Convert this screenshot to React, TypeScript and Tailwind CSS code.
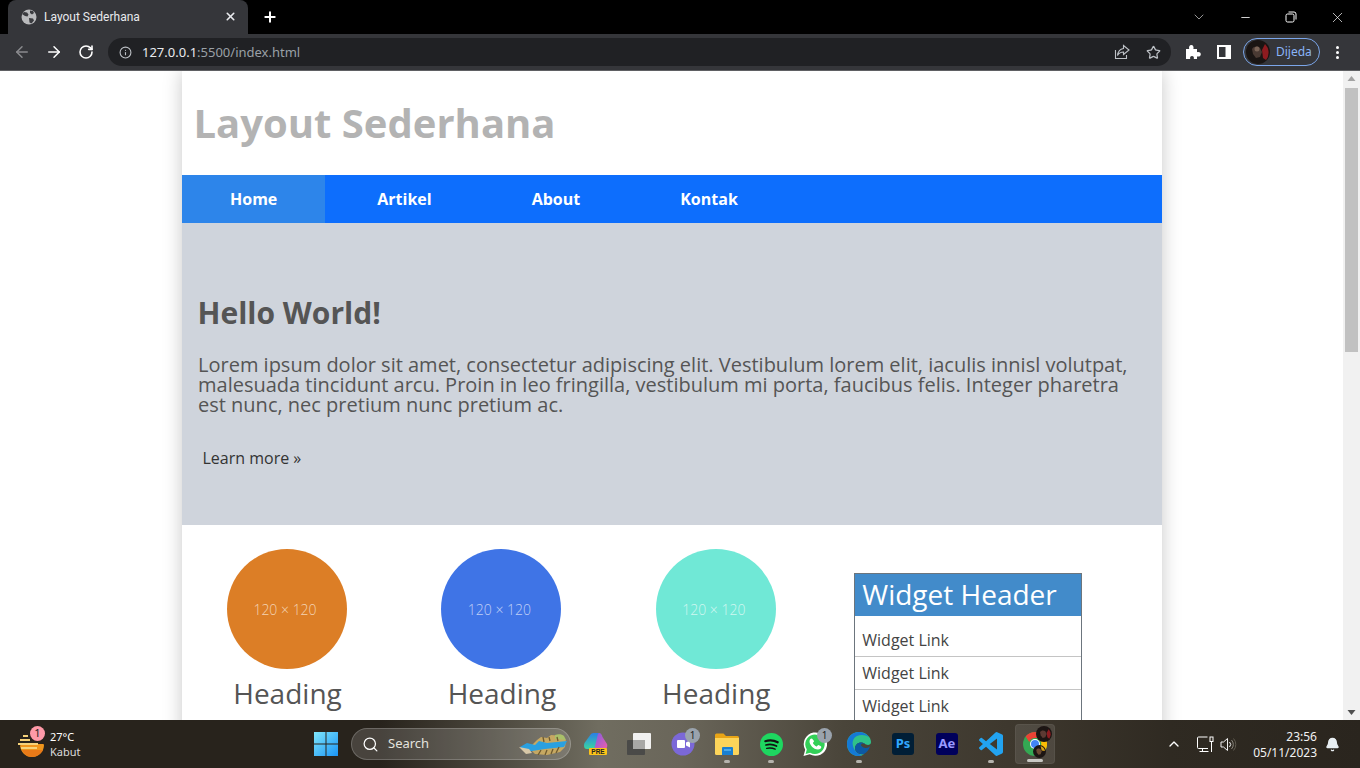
import React from "react";
import { ArrowLeft, ArrowRight, RotateCw, Info, Star, X, Plus, ChevronDown, Minus, Search, ChevronUp, Bell } from "lucide-react";

const font = { fontFamily: '"Open Sans", sans-serif' };

function Globe() {
  return (
    <svg width="16" height="16" viewBox="0 0 16 16">
      <circle cx="8" cy="8" r="7.5" fill="#b9babc" />
      <path d="M3 3l3 .5 1.5 2-1 2-2.5-.5-3-2zM9 1.5l3 .5 1 2-2 1.5-2-1.5zM8 9l4 .5 1 2-2.5 3-2-1z" fill="#3a3b3f" />
    </svg>
  );
}

function Restore() {
  return (
    <svg width="12" height="12" viewBox="0 0 12 12" fill="none" stroke="#fff" strokeWidth="1">
      <rect x="1" y="3" width="8" height="8" rx="1.5" />
      <path d="M3.5 1h5.5a2 2 0 0 1 2 2v5.5" />
    </svg>
  );
}

function Share() {
  return (
    <svg width="16" height="16" viewBox="0 0 16 16" fill="none" stroke="#bdc1c6" strokeWidth="1.1">
      <path d="M1.5 6v8.5h11V11" />
      <path d="M9.5 1.5 15 6l-5.500 4.500V8C7 8 5 9 3.500 11.500 4 7.500 6 5 9.500 4.500z" />
    </svg>
  );
}

function Puzzle() {
  return (
    <svg width="16" height="16" viewBox="0 0 16 16" fill="#fff">
      <path d="M1 5h3.200C3.600 3 4.500 1 6.300 1s2.700 2 2.100 4H12v3.300c2-.6 3.800.2 3.800 2s-1.800 2.700-3.800 2.100V15H8.800c.5-1.900-.4-3-1.800-3s-2.300 1.100-1.800 3H1z" />
    </svg>
  );
}

function SidePanel() {
  return (
    <svg width="14" height="14" viewBox="0 0 14 14">
      <rect width="14" height="14" fill="#fff" />
      <rect x="2" y="2" width="6.500" height="10" fill="#35363a" />
    </svg>
  );
}

function Avatar() {
  return (
    <svg width="24" height="24" viewBox="0 0 24 24">
      <circle cx="12" cy="12" r="12" fill="#1a1513" />
      <path d="M19 4a12 12 0 0 1 1 16l-3-2-1-8z" fill="#8e1b20" />
      <path d="M6 9c2-3 6-3 8-1l2 4-2 5-4 1-3-4z" fill="#4a3a33" />
      <circle cx="11" cy="9" r="2.500" fill="#7a6457" />
    </svg>
  );
}

function TopBars() {
  return (
    <div className="shrink-0">
      <div className="flex h-[34px] items-end bg-black pl-2">
        <div className="flex h-[34px] w-[240px] items-center rounded-t-lg bg-[#35363a] pb-[1px] pl-[13px] pr-[11px]" style={{ fontFamily: "Roboto, sans-serif" }}>
          <Globe />
          <span className="ml-[7px] flex-1 text-[12px] text-[#e8eaed]">Layout Sederhana</span>
          <X size={13} color="#e8eaed" strokeWidth={3} />
        </div>
        <div className="ml-[14px] flex h-[34px] w-[16px] items-center">
          <Plus size={16} color="#fff" strokeWidth={3} />
        </div>
        <div className="ml-auto flex h-[34px] items-center self-start">
          <div className="ml-[-2px] flex w-[46px] justify-center"><ChevronDown size={16} color="#e0e0e0" strokeWidth={1} /></div>
          <div className="flex w-[46px] justify-center"><Minus size={13} color="#fff" strokeWidth={1.5} /></div>
          <div className="flex w-[46px] justify-center"><Restore /></div>
          <div className="flex w-[46px] justify-center"><X size={17} color="#fff" strokeWidth={1} /></div>
        </div>
      </div>
      <div className="flex h-[36px] items-center bg-[#35363a] pr-[14px]">
        <div className="flex w-[108px] items-center pl-[13px]">
          <ArrowLeft size={18} color="#8a8b8e" strokeWidth={2} />
          <ArrowRight size={18} color="#fff" strokeWidth={2} className="ml-[14px]" />
          <RotateCw size={16} color="#fff" strokeWidth={2.400} className="ml-[15px]" />
        </div>
        <div className="flex h-[28px] w-[1063px] items-center rounded-full bg-[#202124] pl-[11px] pr-[10px]">
          <Info size={13} color="#bdc1c6" strokeWidth={2} />
          <span className="ml-[10px] flex-1 pt-[1px] text-[13px]">
            <span className="text-[#e8eaed]">127.0.0.1</span>
            <span className="text-[#9aa0a6]">:5500/index.html</span>
          </span>
          <Share />
          <Star size={15} color="#bdc1c6" strokeWidth={2} className="ml-[16px]" />
        </div>
        <div className="ml-[14px] flex items-center">
          <Puzzle />
          <div className="ml-[16px]"><SidePanel /></div>
          <div className="ml-[12px] flex h-[28px] w-[77px] items-center rounded-full border border-[#7ba6ea] pl-[2px]">
            <Avatar />
            <span className="ml-[6px] text-[12px] text-[#8ab4f8]">Dijeda</span>
          </div>
          <div className="ml-[16px] flex flex-col gap-[2px]">
            <span className="h-[3px] w-[3px] rounded-full bg-white" />
            <span className="h-[3px] w-[3px] rounded-full bg-white" />
            <span className="h-[3px] w-[3px] rounded-full bg-white" />
          </div>
        </div>
      </div>
      <div className="h-px bg-[#5f6063]" />
    </div>
  );
}

function Col({ color, text }: { color: string; text: string }) {
  return (
    <div className="flex w-[210px] flex-col items-center">
      <div className={`flex h-[120px] w-[120px] items-center justify-center rounded-full pr-[4px] ${color}`}>
        <span className="text-[14px] font-light" style={{ color: text }}>120 × 120</span>
      </div>
      <h3 className="ml-[1px] mt-[4px] text-[28px] font-normal leading-[40px] text-[#555]">Heading</h3>
    </div>
  );
}

function Widget() {
  return (
    <div className="ml-[33px] mt-[48px] h-[200px] w-[228px] border border-[#6c757d]">
      <div className="flex h-[42px] items-center bg-[#428bca] pb-[2px] pl-[7.500px] text-[28px] text-white">Widget Header</div>
      <div className="mt-[8px] flex h-[33px] items-center border-b border-[#c4c4c4] pl-[7.500px] text-[16px] text-[#444]">Widget Link</div>
      <div className="flex h-[33px] items-center border-b border-[#c4c4c4] pl-[7.500px] text-[16px] text-[#444]">Widget Link</div>
      <div className="flex h-[33px] items-center border-b border-[#c4c4c4] pl-[7.500px] text-[16px] text-[#444]">Widget Link</div>
    </div>
  );
}

function Page() {
  return (
    <div className="flex min-h-0 flex-1 bg-white">
      <div className="min-w-0 flex-1 overflow-hidden">
        <div className="ml-[182px] h-[800px] w-[980px] bg-white shadow-[0_0_18px_rgba(0,0,0,0.22)]" style={font}>
          <div className="flex h-[104px] items-center pl-[11.500px]">
            <h1 className="text-[40px] font-bold text-[#b3b3b3]">Layout Sederhana</h1>
          </div>
          <nav className="flex h-[48px] gap-[4px] bg-[#0d6efd] text-[16px] font-bold text-white">
            <a className="flex items-center bg-[#2d85ea] px-12">Home</a>
            <a className="flex items-center px-12">Artikel</a>
            <a className="flex items-center px-12">About</a>
            <a className="flex items-center px-12">Kontak</a>
          </nav>
          <section className="h-[302px] bg-[#cfd4dc] px-4 pt-[68px] text-[#555]">
            <h2 className="ml-[-0.500px] text-[30px] font-bold leading-[44px]">Hello World!</h2>
            <p className="mt-[20px] text-[20px] leading-[20px]">
              Lorem ipsum dolor sit amet, consectetur adipiscing elit. Vestibulum lorem elit, iaculis innisl volutpat, malesuada tincidunt arcu. Proin in leo fringilla, vestibulum mi porta, faucibus felis. Integer pharetra est nunc, nec pretium nunc pretium ac.
            </p>
            <a className="mt-[31px] ml-[4.500px] block text-[16px] leading-[24px] text-[#333]">Learn more »</a>
          </section>
          <div className="flex">
            <div className="flex gap-[4.400px] pt-[24px]">
              <Col color="bg-[#dc7e26]" text="#f3d3b4" />
              <Col color="bg-[#3f74e6]" text="#c0d0f6" />
              <Col color="bg-[#70e8d6]" text="#d0f7f1" />
            </div>
            <Widget />
          </div>
        </div>
      </div>
      <div className="flex w-[17px] shrink-0 flex-col items-center bg-[#f1f1f1]">
        <svg width="17" height="17" viewBox="0 0 17 17"><path d="M8.500 5l4 5h-8z" fill="#a3a3a3" /></svg>
        <div className="h-[264px] w-[13px] bg-[#c1c1c1]" />
        <div className="flex-1" />
        <svg width="17" height="17" viewBox="0 0 17 17"><path d="M8.500 12l4-5h-8z" fill="#505050" /></svg>
      </div>
    </div>
  );
}

function Slot({ children, dot, badge, first }: { children: React.ReactNode; dot?: boolean; badge?: boolean; first?: boolean }) {
  return (
    <div className={`relative flex h-[48px] items-center justify-center ${first ? "w-[43px] pl-[1px]" : "w-[44px]"}`}>
      {children}
      {badge && (
        <span className="absolute right-[5px] top-[8px] flex h-[15px] w-[15px] items-center justify-center rounded-full bg-[#9aa3ad] text-[10px] text-[#222]">1</span>
      )}
      {dot && <span className="absolute bottom-[5px] h-[3px] w-[6px] rounded-full bg-[#b5b3ad]" />}
    </div>
  );
}

function Windows() {
  return (
    <svg width="24" height="24" viewBox="0 0 24 24">
      <defs>
        <linearGradient id="w" x1="0" y1="0" x2="1" y2="1">
          <stop offset="0" stopColor="#7fe6fb" /><stop offset="1" stopColor="#1a94f5" />
        </linearGradient>
      </defs>
      <path fill="url(#w)" d="M0 0h11.500v11.500H0zM12.500 0H24v11.500H12.500zM0 12.500h11.500V24H0zM12.500 12.500H24V24H12.500z" />
    </svg>
  );
}

function Copilot() {
  return (
    <svg width="24" height="22" viewBox="0 0 24 22">
      <defs>
        <linearGradient id="cl" x1="0" y1="0" x2="0" y2="1">
          <stop offset="0" stopColor="#2a7fe6" /><stop offset="1" stopColor="#39d6a0" />
        </linearGradient>
        <linearGradient id="cr" x1="0" y1="0" x2="1" y2="1">
          <stop offset="0" stopColor="#7a5be8" /><stop offset="1" stopColor="#f05fa8" />
        </linearGradient>
      </defs>
      <path d="M7 1c1-1 2-1 3-1h5l-4 16H3C0 16-.5 13 .5 10z" fill="url(#cl)" />
      <path d="M15 0c2 0 3 2 3.500 4L23 11c1 3-1 6-4 6h-9l3-12c.3-2 1-5 2-5z" fill="url(#cr)" />
      <rect x="5" y="15" width="18" height="7" rx="1" fill="#fcc419" />
      <text x="14" y="21" textAnchor="middle" fontSize="6.500" fontWeight="800" fill="#222" fontFamily="Liberation Sans">PRE</text>
    </svg>
  );
}

function TaskView() {
  return (
    <svg width="24" height="22" viewBox="0 0 24 22">
      <rect x="0" y="7" width="18" height="15" rx="1" fill="#4a4a48" />
      <rect x="6" y="0" width="18" height="16" rx="1" fill="#f1f1f0" />
      <rect x="6" y="7" width="12" height="9" fill="#a8a8a6" />
    </svg>
  );
}

function Meet() {
  return (
    <svg width="24" height="24" viewBox="0 0 24 24">
      <circle cx="12" cy="12" r="11.500" fill="#7b68d8" />
      <rect x="6" y="8" width="8" height="8" rx="1" fill="#fff" />
      <path d="M15 10.500l4-2v7l-4-2z" fill="#fff" />
    </svg>
  );
}

function Folder() {
  return (
    <svg width="24" height="22" viewBox="0 0 24 22">
      <path d="M0 2a1.500 1.500 0 0 1 1.500-1.500h7L11 3h11.500A1.500 1.500 0 0 1 24 4.500V6H0z" fill="#e8a416" />
      <path d="M0 5h24v15.500a1.500 1.500 0 0 1-1.500 1.500h-21A1.500 1.500 0 0 1 0 20.500z" fill="#fcd45a" />
      <path d="M8 14h9a1 1 0 0 1 1 1v7H7v-7a1 1 0 0 1 1-1z" fill="#1a7fd0" />
      <rect x="9" y="16" width="7" height="2" fill="#4ba9ea" />
    </svg>
  );
}

function Spotify() {
  return (
    <svg width="23" height="23" viewBox="0 0 24 24">
      <circle cx="12" cy="12" r="12" fill="#1ed760" />
      <g fill="none" stroke="#111" strokeLinecap="round">
        <path d="M5.500 8.500c4.500-1.300 9-1 13 1.200" strokeWidth="2.200" />
        <path d="M6.200 12.500c3.800-1 7.500-.7 11 1.100" strokeWidth="1.800" />
        <path d="M7 16c3-.7 6-.5 8.800.9" strokeWidth="1.500" />
      </g>
    </svg>
  );
}

function WhatsApp() {
  return (
    <svg width="24" height="24" viewBox="0 0 24 24">
      <path d="M.500 24l1.700-6.200A11.700 11.700 0 1 1 6.700 22.300z" fill="#fff" />
      <path d="M2.600 21.900l1.200-4.400A9.700 9.700 0 1 1 7.200 20.700z" fill="#33d058" />
      <path d="M8.500 6.500c-.8 0-2 1.200-2 3 0 3 3.800 8 8.500 8 2 0 3.300-1.300 3.300-2.500 0-.6-2.500-1.900-3-1.900s-1 1.300-1.600 1.300c-1 0-3.700-2.600-3.700-3.500 0-.5 1-1.200 1-1.700S9.200 6.500 8.500 6.500z" fill="#fff" />
    </svg>
  );
}

function Edge() {
  return (
    <svg width="24" height="24" viewBox="0 0 24 24">
      <path d="M12 0C5 0 0 5 0 12c0 7 5 12 11 12 3 0 5-1 6-2-5 1-9-2-9-6 0-2 1-3 2-4 2-2 6-2 8 0 1 1 6 2 6-2C24 5 19 0 12 0z" fill="#2fc28a" />
      <path d="M0 12C0 5 5 0 12 0c4 0 8 2 10 5-3-2-8-3-12-1C6 6 5 10 6 14c1 4 4 8 9 9-1 .6-2.500 1-4 1C5 24 0 19 0 12z" fill="#1579d6" />
      <path d="M8 16c0-2 1-3 2-4 2-2 6-2 8 0-2-1-4-.5-4 1s3 3 5 3c2 0 3-1 4-2-1 4-3 6-6 8-5 1-9-2-9-6z" fill="#0c59a4" />
    </svg>
  );
}

function AppTile({ bg, fg, label }: { bg: string; fg: string; label: string }) {
  return (
    <div className={`flex h-[22px] w-[22px] items-center justify-center rounded-[3px] text-[13px] font-bold ${bg} ${fg}`}>{label}</div>
  );
}

function VSCode() {
  return (
    <svg width="24" height="24" viewBox="0 0 24 24">
      <path fill="#22a3f0" d="M23.150 2.587L18.210.21a1.494 1.494 0 0 0-1.705.29l-9.460 8.630-4.120-3.128a.999.999 0 0 0-1.276.057L.327 7.261A1 1 0 0 0 .326 8.740L3.899 12 .326 15.260a1 1 0 0 0 .001 1.479L1.650 17.940a.999.999 0 0 0 1.276.057l4.120-3.128 9.460 8.630a1.492 1.492 0 0 0 1.704.29l4.942-2.377A1.500 1.500 0 0 0 24 20.060V3.939a1.500 1.500 0 0 0-.850-1.352zm-5.146 14.861L10.826 12l7.178-5.448v10.896z" />
    </svg>
  );
}

function Chrome() {
  return (
    <div className="relative h-[24px] w-[24px]">
      <svg width="24" height="24" viewBox="0 0 24 24">
        <circle cx="12" cy="12" r="12" fill="#34a853" />
        <path d="M12 0a12 12 0 0 1 10.400 6H12a6 6 0 0 0-5.700 4L2.600 4.600A12 12 0 0 1 12 0z" fill="#ea4335" />
        <path d="M22.400 6A12 12 0 0 1 12 24l5.200-9A6 6 0 0 0 16 7z" fill="#fbbc04" />
        <circle cx="12" cy="12" r="5" fill="#fff" />
        <circle cx="12" cy="12" r="4" fill="#4285f4" />
      </svg>
      <div className="absolute right-[-5px] top-[-6px]">
        <svg width="16" height="16" viewBox="0 0 24 24"><circle cx="12" cy="12" r="12" fill="#1c1513" /><path d="M6 9c2-3 6-3 8-1l2 4-2 5-4 1-3-4z" fill="#5c3a33" /><path d="M19 5a12 12 0 0 1 1 14l-3-2-1-7z" fill="#8e1b20" /></svg>
      </div>
      <div className="absolute bottom-[-2px] right-[1px]">
        <svg width="13" height="13" viewBox="0 0 24 24"><circle cx="12" cy="12" r="12" fill="#1c1513" /><path d="M6 9c2-3 6-3 8-1l2 4-2 5-4 1-3-4z" fill="#6c4a33" /><path d="M14 2a12 12 0 0 1 8 9l-6-1z" fill="#d9a416" /></svg>
      </div>
    </div>
  );
}

function Weather() {
  return (
    <svg width="26" height="22" viewBox="0 0 26 22">
      <path d="M3 9h22c1 0 1 1 1 1 0 6-5 12-12 12S3 17 2 11z" fill="#f0961c" />
      <path d="M4 15h21c-2 4-6 7-11 7S6 19 4 15z" fill="#e87a18" />
      <g fill="#f6d27a">
        <rect x="5" y="0" width="5" height="2" />
        <rect x="2" y="4" width="10" height="2" />
        <rect x="0" y="8" width="20" height="2" />
        <rect x="3" y="12" width="16" height="2" />
      </g>
    </svg>
  );
}

function Network() {
  return (
    <svg width="17" height="17" viewBox="0 0 17 17" fill="none" stroke="#fff" strokeWidth="1">
      <path d="M11 12.500H1.500a1 1 0 0 1-1-1V2a1 1 0 0 1 1-1h9" />
      <path d="M5.500 12.500v3M2.500 15.500h9" />
      <rect x="13" y="1" width="3" height="4.500" />
      <path d="M14.500 5.500V16" />
    </svg>
  );
}

function Speaker() {
  return (
    <svg width="17" height="15" viewBox="0 0 17 15" fill="none" strokeWidth="1">
      <path d="M1 5h2.500L7.500 1.500v12L3.500 10H1z" stroke="#f2f2f2" />
      <path d="M9.500 5a3.500 3.500 0 0 1 0 5" stroke="#f2f2f2" />
      <path d="M11.500 3a6.500 6.500 0 0 1 0 9" stroke="#8a877e" />
      <path d="M13.500 1.500a9 9 0 0 1 0 12" stroke="#5f5b50" />
    </svg>
  );
}

function Feather() {
  return (
    <svg width="50" height="21" viewBox="0 0 50 21">
      <path d="M18 6l4-3 6 1 4-3 12 1 3 5-1 6-5 5-13 3-12-1-6-6z" fill="#c6a862" />
      <path d="M36 1c3-1 7-1 9 1l2 4-11-1z" fill="#a9c06a" />
      <path d="M1 13l7-4 8 2 4-4 8 2 20-2-3 6-19 2-13 2c-5 0-10-1-12-4z" fill="#2aa0e0" />
      <path d="M0 13l7 7 6-1-3-4z" fill="#d8c8a8" />
      <path d="M22 16l-3 5M28 16l-2 5M34 15l-2 5M40 13l-3 6M24 3l1 5M30 3l1 4M38 3l1 4" stroke="#6e5a30" strokeWidth="1.300" />
    </svg>
  );
}

function Taskbar() {
  return (
    <div className="flex h-[48px] shrink-0 items-center bg-[linear-gradient(90deg,#28231c_0%,#28231c_28%,#4a463c_36%,#706d60_44%,#6a665a_50%,#4a453a_62%,#3c362c_76%,#2f2a22_86%,#2a251e_100%)] text-white" style={{ fontFamily: '"Noto Sans", sans-serif' }}>
      <div className="flex w-[304px] items-center pl-[18px]">
        <div className="relative mt-[3px]">
          <Weather />
          <span className="absolute right-[-1px] top-[-9px] flex h-[15px] w-[15px] items-center justify-center rounded-full bg-[#ff9aa8] text-[11px] text-[#222]">1</span>
        </div>
        <div className="ml-[6px] flex flex-col text-[11px] leading-[15px]">
          <span>27°C</span>
          <span className="text-[#dcdcdc]">Kabut</span>
        </div>
      </div>
      <div className="flex h-[48px] w-[44px] items-center justify-center"><Windows /></div>
      <div className="ml-[3px] flex h-[32px] w-[220px] items-center rounded-full border border-white/20 bg-white/15 pl-[10px] pr-[1px]">
        <Search size={17} color="#fff" strokeWidth={1.750} />
        <span className="ml-[9px] flex-1 text-[13px] text-[#e4e3de]">Search</span>
        <Feather />
      </div>
      <div className="ml-[3px] flex">
        <Slot first><Copilot /></Slot>
        <Slot><TaskView /></Slot>
        <Slot badge><Meet /></Slot>
        <Slot dot><Folder /></Slot>
        <Slot dot><Spotify /></Slot>
        <Slot badge><WhatsApp /></Slot>
        <Slot dot><Edge /></Slot>
        <Slot><AppTile bg="bg-[#001e36]" fg="text-[#31a8ff]" label="Ps" /></Slot>
        <Slot><AppTile bg="bg-[#00005b]" fg="text-[#9999ff]" label="Ae" /></Slot>
        <Slot dot><VSCode /></Slot>
        <div className="relative ml-[2px] mt-[4px] flex h-[40px] w-[40px] items-center justify-center rounded-[4px] border border-white/5 bg-white/10">
          <Chrome />
          <span className="absolute bottom-[1px] h-[3px] w-[16px] rounded-full bg-[#c9c8c4]" />
        </div>
      </div>
      <div className="ml-auto flex items-center pr-[20px]">
        <ChevronUp size={16} color="#fff" strokeWidth={2} />
        <div className="ml-[15px]"><Network /></div>
        <div className="ml-[6px]"><Speaker /></div>
        <div className="ml-[16px] mt-[2px] flex flex-col items-end text-[12px] leading-[16px] text-[#f2f2f2]">
          <span>23:56</span>
          <span>05/11/2023</span>
        </div>
        <Bell size={15} color="#e8eef2" fill="#e8eef2" className="ml-[8px]" />
      </div>
    </div>
  );
}

export default function App() {
  return (
    <div className="flex h-[768px] w-[1360px] flex-col overflow-hidden bg-white">
      <TopBars />
      <Page />
      <Taskbar />
    </div>
  );
}
